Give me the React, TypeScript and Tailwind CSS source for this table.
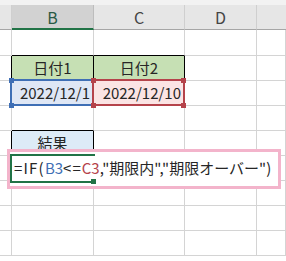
import React from 'react';

// Column widths include the right gridline (border-box)
const COLS = ['w-[12px]', 'w-[82px]', 'w-[91px]', 'w-[72px]', 'flex-1'];

type CellProps = {
  col: number;
  className?: string;
  children?: React.ReactNode;
};

const Cell: React.FC<CellProps> = ({ col, className = '', children }) => (
  <div className={`${COLS[col]} shrink-0 h-full border-r border-b border-[#d4d4d4] flex items-center ${className}`}>
    {children}
  </div>
);

const Row: React.FC<{ h?: string; children: React.ReactNode }> = ({ h = 'h-[25px]', children }) => (
  <div className={`flex ${h}`}>{children}</div>
);

const Handle: React.FC<{ x: string; y: string; color: string }> = ({ x, y, color }) => (
  <div className={`absolute ${x} ${y} w-[5px] h-[5px] ${color}`} />
);

export default function App() {
  return (
    <div className="relative w-[286px] h-[261px] overflow-hidden bg-white text-[15px] text-[#262626] font-['Noto_Sans_CJK_JP',sans-serif]">
      <div className="h-[5px] bg-[#f2f2f2]" />

      {/* column headers */}
      <div className="flex h-[25px] text-[16px] text-[#444]">
        <div className={`${COLS[0]} shrink-0 bg-[#e6e6e6] border-r border-b border-r-[#cfcfcf] border-b-[#a6a6a6]`} />
        <div className={`${COLS[1]} shrink-0 bg-[#d2d2d2] border-r border-r-[#bdbdbd] border-b-2 border-b-[#217346] flex items-center justify-center text-[#2a5a45]`}>B</div>
        <div className={`${COLS[2]} shrink-0 bg-[#e6e6e6] border-r border-b border-r-[#cfcfcf] border-b-[#a6a6a6] flex items-center justify-center`}>C</div>
        <div className={`${COLS[3]} shrink-0 bg-[#e6e6e6] border-r border-b border-r-[#cfcfcf] border-b-[#a6a6a6] flex items-center justify-center`}>D</div>
        <div className="flex-1 bg-[#e6e6e6] border-b border-b-[#a6a6a6]" />
      </div>

      {/* row 2 */}
      <Row h="h-[26px]">
        <Cell col={0} />
        <Cell col={1} className="border-b-black" />
        <Cell col={2} className="border-b-black" />
        <Cell col={3} />
        <Cell col={4} />
      </Row>

      {/* row 3: labels */}
      <Row>
        <Cell col={0} className="border-r-black" />
        <Cell col={1} className="bg-[#c6e0b4] border-r-black border-b-black justify-center">日付1</Cell>
        <Cell col={2} className="bg-[#c6e0b4] border-r-black border-b-black justify-center">日付2</Cell>
        <Cell col={3} />
        <Cell col={4} />
      </Row>

      {/* row 4: dates */}
      <Row>
        <Cell col={0} />
        <Cell col={1} className="bg-[#dfe7f5] justify-end pr-[3px] overflow-hidden">2022/12/1</Cell>
        <Cell col={2} className="bg-[#fbe4e4] justify-end pr-[3px]">2022/12/10</Cell>
        <Cell col={3} />
        <Cell col={4} />
      </Row>

      {/* row 5 */}
      <Row>
        <Cell col={0} />
        <Cell col={1} className="border-b-black" />
        <Cell col={2} />
        <Cell col={3} />
        <Cell col={4} />
      </Row>

      {/* row 6: result label */}
      <Row>
        <Cell col={0} className="border-r-black" />
        <Cell col={1} className="bg-[#ddebf7] border-r-black border-b-black justify-center">結果</Cell>
        <Cell col={2} />
        <Cell col={3} />
        <Cell col={4} />
      </Row>

      {[0, 1, 2, 3].map((i) => (
        <Row key={i}>
          <Cell col={0} />
          <Cell col={1} />
          <Cell col={2} />
          <Cell col={3} />
          <Cell col={4} />
        </Row>
      ))}

      {/* reference highlights for B3 / C3 */}
      <div className="absolute left-[10px] top-[79px] w-[84px] h-[27px] border-2 border-[#3f6fb5]" />
      <div className="absolute left-[92px] top-[79px] w-[93px] h-[27px] border-2 border-[#b5434b]" />
      <Handle x="left-[9px]" y="top-[78px]" color="bg-[#3f6fb5]" />
      <Handle x="left-[9px]" y="top-[103px]" color="bg-[#3f6fb5]" />
      <Handle x="left-[91px]" y="top-[78px]" color="bg-[#b5434b]" />
      <Handle x="left-[91px]" y="top-[103px]" color="bg-[#b5434b]" />
      <Handle x="left-[181px]" y="top-[78px]" color="bg-[#b5434b]" />
      <Handle x="left-[181px]" y="top-[103px]" color="bg-[#b5434b]" />

      {/* in-cell editor with callout frame */}
      <div className="absolute left-[7px] top-[149px] w-[274px] h-[40px] border-[3px] border-[#f3b4cb] bg-white" />
      <div className="absolute left-[10px] top-[154px] w-[85px] h-[29px] border-2 border-r-0 border-[#217346]" />
      <div className="absolute left-[91px] top-[179px] w-[5px] h-[5px] bg-[#217346]" />
      <div className="absolute left-[14px] top-[157px] h-[22px] flex items-center whitespace-nowrap">
        <span className="tracking-[1.2px]">=IF(</span>
        <span className="text-[#3f6fb5]">B3</span>
        <span className="tracking-[1px]">&lt;=</span>
        <span className="text-[#b5434b]">C3</span>
        <span>,"期限内","期限オーバー")</span>
      </div>
    </div>
  );
}
